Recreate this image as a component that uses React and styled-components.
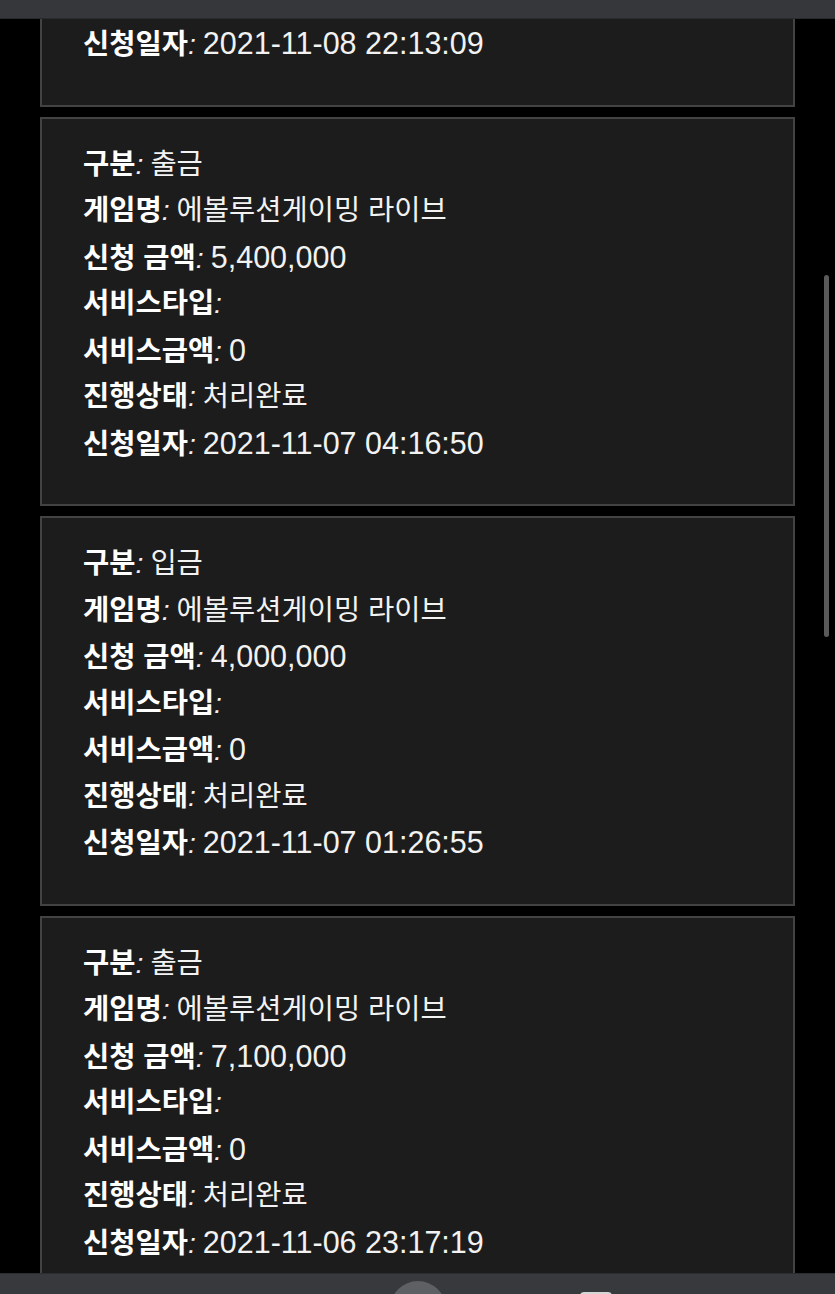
import React from 'react'
import styled, { createGlobalStyle } from 'styled-components'

const GlobalStyle = createGlobalStyle`
  html, body {
    margin: 0;
    padding: 0;
    background: #000;
  }
  body {
    font-family: "Liberation Sans", "Noto Sans CJK KR", sans-serif;
    color: #f2f2f2;
  }
`

const Screen = styled.div`
  width: 835px;
  height: 1294px;
  display: flex;
  flex-direction: column;
  background: #000;
  overflow: hidden;
`

const TopBar = styled.div`
  height: 19px;
  flex: none;
  background: #36373b;
  border-bottom: 1px solid #2a2b2e;
  box-sizing: border-box;
`

const Scroller = styled.div`
  position: relative;
  flex: 1;
  overflow: hidden;
`

const List = styled.div`
  margin-top: ${props => -props.offset}px;
  padding: 0 40px;
  display: flex;
  flex-direction: column;
  gap: 10px;
`

const Card = styled.div`
  background: #1c1c1c;
  border: 2px solid #434343;
  padding: 22px 41px 38px;
`

const Row = styled.div`
  height: 46.5px;
  font-size: 28.5px;
  line-height: 46.5px;
  white-space: nowrap;
`

const Label = styled.b`
  font-weight: 700;
  color: #fff;
`

const Colon = styled.i`
  font-style: italic;
  font-weight: 400;
  margin-right: 7px;
`

const Value = styled.span`
  font-size: ${props => props.numeric ? '30.5px' : '28.5px'};
`

const ScrollThumb = styled.div`
  position: absolute;
  right: 6px;
  top: 256px;
  width: 5px;
  height: 362px;
  border-radius: 3px;
  background: #5a5a5a;
`

const BottomBar = styled.div`
  position: relative;
  height: 21px;
  flex: none;
  background: #38393d;
  border-top: 1px solid #2c2d30;
  box-sizing: border-box;
  overflow: hidden;
`

const HomeDot = styled.div`
  position: absolute;
  left: 390px;
  top: 7px;
  width: 56px;
  height: 56px;
  border-radius: 50%;
  background: #5f6064;
`

const TabSquare = styled.div`
  position: absolute;
  left: 580px;
  top: 18px;
  width: 32px;
  height: 32px;
  border-radius: 4px;
  background: #d6d6d6;
`

const records = [
  { type: '입금', amount: '3,000,000', date: '2021-11-08 22:13:09' },
  { type: '출금', amount: '5,400,000', date: '2021-11-07 04:16:50' },
  { type: '입금', amount: '4,000,000', date: '2021-11-07 01:26:55' },
  { type: '출금', amount: '7,100,000', date: '2021-11-06 23:17:19' },
  { type: '입금', amount: '2,000,000', date: '2021-11-06 20:02:41' },
]

const Field = ({ label, value, numeric }) => (
  <Row>
    <Label>{label}</Label>
    <Colon>:</Colon>
    <Value numeric={numeric}>{value}</Value>
  </Row>
)

const Record = ({ item }) => (
  <Card>
    <Field label="구분" value={item.type} />
    <Field label="게임명" value="에볼루션게이밍 라이브" />
    <Field label="신청 금액" value={item.amount} numeric />
    <Field label="서비스타입" value="" />
    <Field label="서비스금액" value="0" numeric />
    <Field label="진행상태" value="처리완료" />
    <Field label="신청일자" value={item.date} numeric />
  </Card>
)

export default function App() {
  return (
    <Screen>
      <GlobalStyle />
      <TopBar />
      <Scroller>
        <List offset={302}>
          {records.map((item, i) => <Record key={i} item={item} />)}
        </List>
        <ScrollThumb />
      </Scroller>
      <BottomBar>
        <HomeDot />
        <TabSquare />
      </BottomBar>
    </Screen>
  )
}
